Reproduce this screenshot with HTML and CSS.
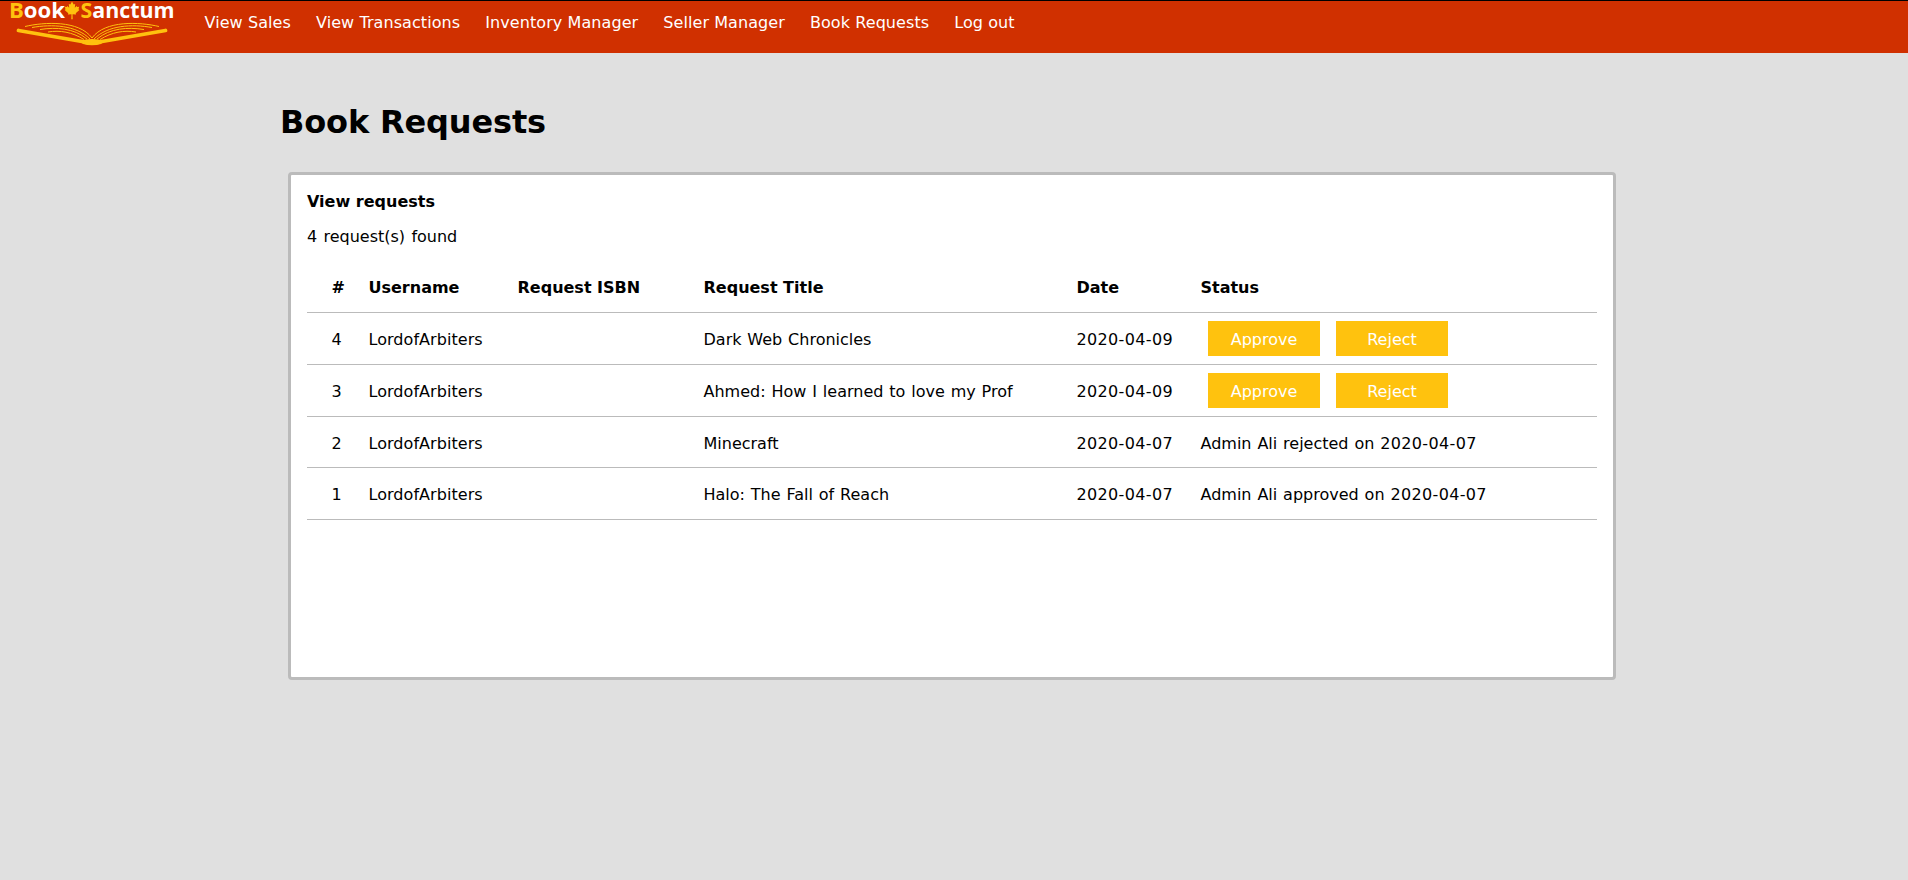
FILE: index.html
```html
<!DOCTYPE html>
<html lang="en">
<head>
<meta charset="utf-8">
<title>Book Requests</title>
<link rel="stylesheet" href="styles.css">
</head>
<body>
<header class="topbar">
  <svg class="logo" viewBox="0 0 174 52" role="img" aria-label="Book Sanctum">
    <g class="logo-text">
      <text x="9" y="16.8" textLength="56" lengthAdjust="spacingAndGlyphs"><tspan class="gold">B</tspan>ook</text>
      <text x="80.5" y="16.8" textLength="94" lengthAdjust="spacingAndGlyphs"><tspan class="gold">S</tspan>anctum</text>
    </g>
    <path class="gold" d="M72 .5l1.700 3 1.500-.6-.4 3.800 1.800-1.700.6 1 2-.2-.7 2.400.9.8-3.700 3.300.4 1.200-3.600-.3.200 5h-1.400l.2-5-3.600.3.400-1.200-3.700-3.300.9-.8-.7-2.400 2 .2.600-1 1.800 1.700-.4-3.800 1.500.6z"/>
    <g class="book">
      <path class="cover" d="M18.500 29.500 82 40.500Q92 43.500 102 40.500L165.500 29.500"/>
      <path class="gold" d="M80 40Q92 36 104 40L101 43Q92 45.500 83 43z"/>
      <path d="M25 25.500C44 21 79 19 92 37C105 19 140 21 159 25.500"/>
      <path d="M32 26.500C52 23 76 24 90 38M152 26.500C132 23 108 24 94 38"/>
      <path d="M40 28.500C56 26 74 27 87 38M144 28.500C128 26 110 27 97 38"/>
      <path d="M48 31C60 29 72 31 84 38.500M136 31C124 29 112 31 100 38.500"/>
    </g>
  </svg>
  <nav class="menu">
    <a>View Sales</a><a>View Transactions</a><a>Inventory Manager</a><a>Seller Manager</a><a>Book Requests</a><a>Log out</a>
  </nav>
</header>
<main class="page">
  <h1>Book Requests</h1>
  <section class="panel">
    <h2>View requests</h2>
    <p>4 request(s) found</p>
    <table>
      <colgroup><col class="c-id"><col class="c-user"><col class="c-isbn"><col class="c-title"><col class="c-date"><col></colgroup>
      <thead><tr><th>#</th><th>Username</th><th>Request ISBN</th><th>Request Title</th><th>Date</th><th>Status</th></tr></thead>
      <tbody>
        <tr><td>4</td><td>LordofArbiters</td><td></td><td>Dark Web Chronicles</td><td><time>2020-04-09</time></td><td class="buttons"><div class="actions"><button>Approve</button><button>Reject</button></div></td></tr>
        <tr><td>3</td><td>LordofArbiters</td><td></td><td>Ahmed: How I learned to love my Prof</td><td><time>2020-04-09</time></td><td class="buttons"><div class="actions"><button>Approve</button><button>Reject</button></div></td></tr>
        <tr class="short"><td>2</td><td>LordofArbiters</td><td></td><td>Minecraft</td><td><time>2020-04-07</time></td><td>Admin Ali rejected on <time>2020-04-07</time></td></tr>
        <tr><td>1</td><td>LordofArbiters</td><td></td><td>Halo: The Fall of Reach</td><td><time>2020-04-07</time></td><td>Admin Ali approved on <time>2020-04-07</time></td></tr>
      </tbody>
    </table>
  </section>
</main>
</body>
</html>
```
FILE: styles.css
```css
* { box-sizing: border-box; }
body {
  margin: 0;
  height: 880px;
  background: #e0e0e0;
  color: #000;
  font: 16px/24px "DejaVu Sans", sans-serif;
}
.topbar {
  display: flex;
  height: 53px;
  border-top: 1px solid #000;
  background: #d03000;
}
.logo { width: 174px; height: 52px; flex: none; overflow: visible; }
.logo-text { font: bold 21.5px "Open Sans", sans-serif; fill: #fff; }
.gold { fill: #ffc20e; }
.book { fill: none; stroke: #ffc20e; stroke-width: 1; }
.book .gold { fill: #ffc20e; stroke: none; }
.book .cover { stroke-width: 3.8; stroke-linecap: round; }
.menu {
  display: flex;
  gap: 25px;
  padding: 10px 0 0 30.5px;
  color: #fff;
  letter-spacing: 0.08px;
}
.page { width: 1336px; margin-left: 280px; }
h1 { margin: 0; padding-top: 45px; font-size: 32px; line-height: 48px; letter-spacing: -0.15px; }
.panel {
  width: 1328px;
  height: 508px;
  margin: 26px 0 0 8px;
  padding: 15px 16px;
  border: 3px solid #bbb;
  border-radius: 4px;
  background: #fff;
}
h2 { margin: 0; font-size: 16px; line-height: 24px; }
p { margin: 11px 0 12px; word-spacing: 1.2px; }
table { width: 1290px; table-layout: fixed; border-collapse: separate; border-spacing: 0; }
.c-id { width: 61px; }
.c-user { width: 149px; }
.c-isbn { width: 186px; }
.c-title { width: 373px; }
.c-date { width: 124px; }
tr { height: 52px; }
.short { height: 51px; }
th, td {
  padding: 2px 0 0 0.5px;
  border-bottom: 1px solid #bbb;
  text-align: left;
  white-space: nowrap;
}
td { word-spacing: 0.8px; }
td:nth-child(2) { letter-spacing: 0.05px; }
time { letter-spacing: 0.35px; }
.short td { padding-top: 3px; }
th:first-child, td:first-child { padding-left: 24.5px; }
.buttons { padding: 0; }
.actions { display: flex; gap: 16px; padding-left: 8px; }
button {
  width: 112px;
  height: 35px;
  padding: 2px 0 0;
  border: 0;
  background: #ffc20e;
  color: #fff;
  font: inherit;
}
```
